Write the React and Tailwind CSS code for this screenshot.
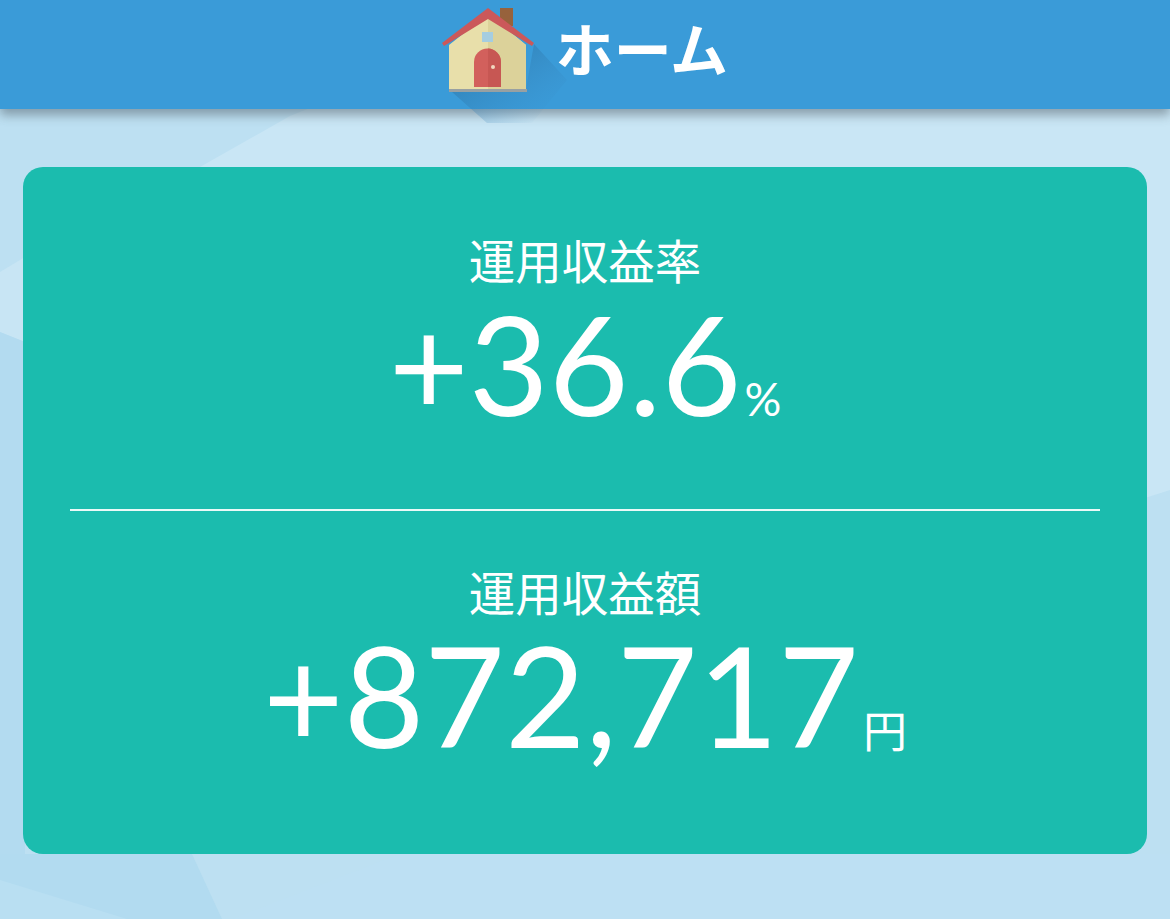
export default function App() {
  return (
    <div className="relative h-[919px] w-full overflow-hidden bg-[#bde0f2] font-['Lato','Noto_Sans_CJK_JP',sans-serif] text-white">
      <svg className="absolute inset-0 h-full w-full" viewBox="0 0 1170 919" preserveAspectRatio="none" aria-hidden="true">
        <polygon points="200,167 290,116 330,100 1170,100 1170,490 700,640" fill="#c9e6f5" />
        <polygon points="0,272 25,257 25,342 0,332" fill="#c8e5f4" />
        <polygon points="0,332 25,342 25,919 0,919" fill="#b3dbf0" />
        <polygon points="0,854 192,854 222,919 0,919" fill="#b2dbf0" />
        <polygon points="0,880 127,919 0,919" fill="#b9dff2" />
        <polygon points="232,919 400,854 1170,854 1170,919" fill="#bde0f3" />
      </svg>
      <header className="relative z-10 flex h-[109px] items-center justify-center gap-[22px] bg-[#3a9bd8] pb-[10px] shadow-[0_6px_10px_rgba(60,70,80,0.45)]">
        <svg width="92" height="84" viewBox="0 0 92 84" className="shrink-0 overflow-visible" aria-hidden="true">
          <defs>
            <linearGradient id="ls" x1="0.1" y1="0.1" x2="0.85" y2="0.9">
              <stop offset="0" stopColor="#2a6f9e" stopOpacity="0.7" />
              <stop offset="1" stopColor="#3a8ac4" stopOpacity="0" />
            </linearGradient>
          </defs>
          <polygon points="92,36 125,72 90,115 45,115 10,84 84,81" fill="url(#ls)" />
          <rect x="58" y="0" width="13" height="18" fill="#97623c" />
          <polygon points="46,6 7,37 7,81 84,81 84,37" fill="#e8dfaa" />
          <polygon points="46,6 84,37 84,81 46,81" fill="#dcd29a" />
          <rect x="40" y="24" width="11" height="10" fill="#a5cde0" />
          <path d="M32 79V54a13.500 13.500 0 0 1 27 0V79Z" fill="#d2605c" />
          <path d="M46 40.500a13.500 13.500 0 0 1 13 13.500V79H46Z" fill="#c75753" />
          <circle cx="51" cy="59" r="2" fill="#f0d8c0" />
          <polygon points="46,0 92,35 90,38 46,11 2,38 0,35" fill="#cb585a" />
          <rect x="7" y="81" width="78" height="3" fill="#98a0a2" />
        </svg>
        <h1 className="text-[58px] leading-none font-bold">ホーム</h1>
      </header>
      <main className="relative mx-[23px] mt-[58px] flex h-[687px] flex-col rounded-[20px] bg-[#1bbcae] px-[47px]">
        <section className="flex h-[342px] flex-col items-center pt-[64px]">
          <div className="text-[46.500px] leading-[60px]">運用収益率</div>
          <div className="mt-[12px] flex h-[120px] items-baseline">
            <span className="text-[138px] leading-[120px]">+36.6</span>
            <span className="ml-[3px] text-[46px] leading-none">%</span>
          </div>
        </section>
        <div className="h-[2px] bg-[#eafaf8]" />
        <section className="flex flex-1 flex-col items-center pt-[52px]">
          <div className="text-[46.500px] leading-[60px]">運用収益額</div>
          <div className="mt-[12px] flex h-[120px] items-baseline">
            <span className="text-[139px] leading-[120px]">+872,717</span>
            <span className="ml-[4px] text-[44px] leading-none">円</span>
          </div>
        </section>
      </main>
    </div>
  );
}
